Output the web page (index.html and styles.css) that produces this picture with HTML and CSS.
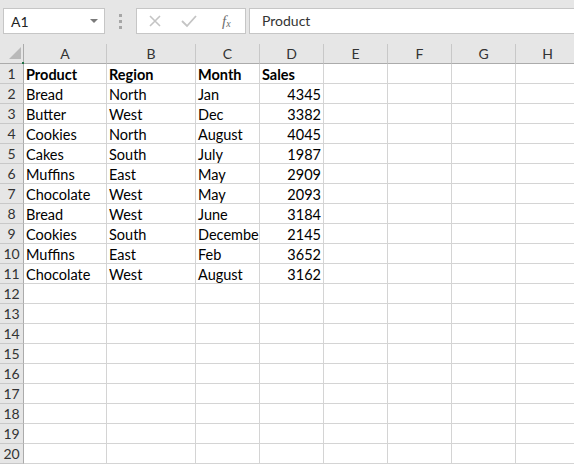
FILE: index.html
```html
<!DOCTYPE html>
<html lang="en">
<head>
    <meta charset="UTF-8">
    <title>Sheet1</title>
    <link rel="stylesheet" href="styles.css">
</head>
<body>
    <div class="formula-bar">
        <div class="name-box">
            <span>A1</span>
            <svg class="drop" width="8" height="4" viewBox="0 0 8 4"><polygon points="0,0 8,0 4,4" fill="#7a7a7a"/></svg>
        </div>
        <div class="grip"><i></i><i></i><i></i></div>
        <div class="fx-buttons">
            <svg width="14" height="14" viewBox="0 0 14 14"><path d="M2 2 L12 12 M12 2 L2 12" stroke="#c4c4c4" stroke-width="1.6" fill="none"/></svg>
            <svg width="16" height="14" viewBox="0 0 16 14"><path d="M1 7 L6 12 L15 2" stroke="#c4c4c4" stroke-width="1.8" fill="none"/></svg>
            <span class="fx">f<sub>x</sub></span>
        </div>
        <div class="formula-input">Product</div>
    </div>

    <div class="sheet">
        <div class="corner">
            <svg width="24" height="20" viewBox="0 0 24 20"><polygon points="21,3 21,15 9,15" fill="#b9b9b9"/><rect x="22" y="18" width="2" height="2" fill="#217346"/></svg>
        </div>
        <div class="col-head">A</div>
        <div class="col-head">B</div>
        <div class="col-head">C</div>
        <div class="col-head">D</div>
        <div class="col-head">E</div>
        <div class="col-head">F</div>
        <div class="col-head">G</div>
        <div class="col-head">H</div>
    </div>

    <script>
    // rows of the sheet: product, region, month, sales
    const data = [
        ['Product', 'Region', 'Month', 'Sales'],
        ['Bread', 'North', 'Jan', 4345],
        ['Butter', 'West', 'Dec', 3382],
        ['Cookies', 'North', 'August', 4045],
        ['Cakes', 'South', 'July', 1987],
        ['Muffins', 'East', 'May', 2909],
        ['Chocolate', 'West', 'May', 2093],
        ['Bread', 'West', 'June', 3184],
        ['Cookies', 'South', 'December', 2145],
        ['Muffins', 'East', 'Feb', 3652],
        ['Chocolate', 'West', 'August', 3162]
    ];
    const sheet = document.querySelector('.sheet');
    for (let r = 1; r <= 20; r++) {
        const head = document.createElement('div');
        head.className = 'row-head';
        head.textContent = r;
        sheet.appendChild(head);
        const row = data[r - 1] || [];
        for (let c = 0; c < 8; c++) {
            const cell = document.createElement('div');
            cell.className = 'cell';
            const v = row[c];
            if (v !== undefined) {
                cell.textContent = v;
                if (typeof v === 'number') cell.classList.add('num');
                if (r === 1) cell.classList.add('bold');
            }
            sheet.appendChild(cell);
        }
    }
    </script>
</body>
</html>
```

FILE: styles.css
```css
* {
    margin: 0;
    padding: 0;
    box-sizing: border-box;
}

body {
    width: 574px;
    height: 465px;
    overflow: hidden;
    background: #fff;
    font-family: Lato, "Liberation Sans", sans-serif;
}

/* top bar with name box and formula input */
.formula-bar {
    height: 44px;
    background: #e6e6e6;
    display: flex;
    align-items: flex-start;
    padding-top: 8px;
}

.name-box {
    margin-left: 3px;
    width: 102px;
    height: 26px;
    background: #fff;
    border: 1px solid #c6c6c6;
    display: flex;
    align-items: center;
    justify-content: space-between;
    padding: 0 6px 0 7px;
    font-size: 14px;
    color: #222;
}

.grip {
    width: 31px;
    height: 26px;
    display: flex;
    flex-direction: column;
    align-items: center;
    justify-content: center;
    gap: 3px;
}

.grip i {
    width: 3px;
    height: 3px;
    background: #a6a6a6;
}

.fx-buttons {
    width: 110px;
    height: 26px;
    background: #fff;
    border: 1px solid #c6c6c6;
    display: flex;
    align-items: center;
    padding-left: 11px;
    gap: 19px;
}

.fx {
    font-family: "Liberation Serif", serif;
    font-style: italic;
    font-size: 15px;
    color: #6e6e6e;
    margin-left: 6px;
}

.fx sub {
    font-size: 10px;
    vertical-align: -1px;
}

.formula-input {
    margin-left: 3px;
    flex: 1;
    height: 26px;
    background: #fff;
    border: 1px solid #c6c6c6;
    border-right: none;
    padding-left: 12px;
    line-height: 24px;
    font-size: 14px;
    color: #333;
}

/* grid of cells */
.sheet {
    display: grid;
    grid-template-columns: 24px 83px 89px 64px 64px 64px 64px 64px 64px;
    grid-auto-rows: 20px;
}

.corner {
    background: #e6e6e6;
    border-right: 1px solid #ababab;
    border-bottom: 1px solid #ababab;
}

.corner svg {
    display: block;
}

.col-head {
    background: #e6e6e6;
    border-right: 1px solid #c8c8c8;
    border-bottom: 1px solid #ababab;
    text-align: center;
    font-size: 14px;
    line-height: 19px;
    color: #333;
}

.row-head {
    background: #e6e6e6;
    border-right: 1px solid #ababab;
    border-bottom: 1px solid #c8c8c8;
    text-align: center;
    font-size: 14px;
    line-height: 20px;
    color: #333;
}

.cell {
    border-right: 1px solid #d4d4d4;
    border-bottom: 1px solid #d4d4d4;
    padding: 1px 2px 0 2px;
    font-size: 14.5px;
    line-height: 19px;
    color: #000;
    white-space: nowrap;
    overflow: hidden;
}

.cell.num {
    text-align: right;
}

.cell.bold {
    font-weight: bold;
}
```
